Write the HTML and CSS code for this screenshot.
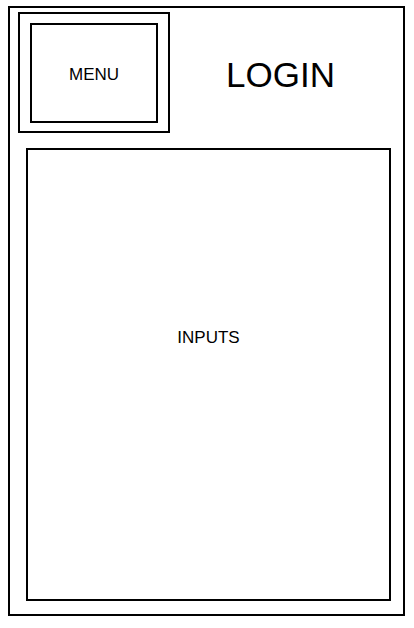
FILE: index.html
```html
<!DOCTYPE html>
<html lang="en">
<head>
  <meta charset="UTF-8" />
  <meta name="viewport" content="width=device-width, initial-scale=1.0" />
  <title>Login</title>
  <link rel="stylesheet" href="styles.css">
</head>
<body>
  <div class="frame">
    <div class="header">
      <div class="menu">
        <div class="menu-inner">MENU</div>
      </div>
      <div class="title">LOGIN</div>
    </div>
    <div class="inputs">INPUTS</div>
  </div>
</body>
</html>
```

FILE: styles.css
```css
body {
  margin: 0;
  padding: 0;
  font-family: 'Liberation Sans', Arial, sans-serif;
  background: #fff;
  color: #000;
}
.frame {
  box-sizing: border-box;
  width: 397px;
  height: 610px;
  margin: 6px 0 0 8px;
  border: 2px solid #000;
  display: flex;
  flex-direction: column;
}
.header {
  display: flex;
  align-items: center;
  padding: 4px 0 0 8px;
}
.menu {
  box-sizing: border-box;
  width: 152px;
  height: 121px;
  border: 2px solid #000;
  padding: 9px 10px 8px 10px;
}
.menu-inner {
  box-sizing: border-box;
  width: 128px;
  height: 100px;
  border: 2px solid #000;
  display: flex;
  align-items: center;
  justify-content: center;
  font-size: 17px;
  padding-top: 3px;
}
.title {
  flex: 1;
  text-align: center;
  font-size: 35px;
  padding: 4px 12px 0 0;
}
.inputs {
  box-sizing: border-box;
  width: 365px;
  height: 453px;
  margin: 15px 0 0 16px;
  border: 2px solid #000;
  text-align: center;
  font-size: 17px;
  padding-top: 178px;
}
```
